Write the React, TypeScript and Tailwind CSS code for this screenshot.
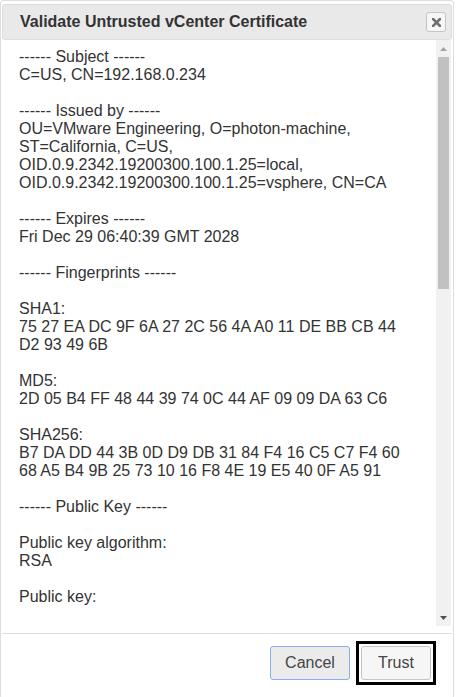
const lines = [
  '------ Subject ------',
  'C=US, CN=192.168.0.234',
  '',
  '------ Issued by ------',
  'OU=VMware Engineering, O=photon-machine,',
  'ST=California, C=US,',
  'OID.0.9.2342.19200300.100.1.25=local,',
  'OID.0.9.2342.19200300.100.1.25=vsphere, CN=CA',
  '',
  '------ Expires ------',
  'Fri Dec 29 06:40:39 GMT 2028',
  '',
  '------ Fingerprints ------',
  '',
  'SHA1:',
  '75 27 EA DC 9F 6A 27 2C 56 4A A0 11 DE BB CB 44',
  'D2 93 49 6B',
  '',
  'MD5:',
  '2D 05 B4 FF 48 44 39 74 0C 44 AF 09 09 DA 63 C6',
  '',
  'SHA256:',
  'B7 DA DD 44 3B 0D D9 DB 31 84 F4 16 C5 C7 F4 60',
  '68 A5 B4 9B 25 73 10 16 F8 4E 19 E5 40 0F A5 91',
  '',
  '------ Public Key ------',
  '',
  'Public key algorithm:',
  'RSA',
  '',
  'Public key:',
];

function Scrollbar() {
  return (
    <div className="w-[15px] flex flex-col bg-[#f1f1f1]">
      <div className="h-[17px] flex items-center justify-center">
        <svg width="7" height="4" viewBox="0 0 7 4">
          <path d="M0 4 L3.5 0 L7 4 Z" fill="#a3a3a3" />
        </svg>
      </div>
      <div className="flex-1 px-[2px]">
        <div className="h-[232px] bg-[#c1c1c1]" />
      </div>
      <div className="h-[17px] flex items-center justify-center">
        <svg width="7" height="4" viewBox="0 0 7 4">
          <path d="M0 0 L7 0 L3.5 4 Z" fill="#505050" />
        </svg>
      </div>
    </div>
  );
}

export default function App() {
  return (
    <div className="w-[456px] h-[697px] bg-white overflow-hidden" style={{ fontFamily: '"Liberation Sans", Arial, sans-serif' }}>
      <div className="w-[454px] h-[699px] border border-[#dddddd] rounded-[3px] pt-[3px] px-[1px] flex flex-col">
        <div className="h-[36px] flex items-center justify-between bg-[#e9e9e9] border border-[#dddddd] rounded-[3px] pl-[17px] pr-[5px]">
          <span className="text-[16px] font-bold text-[#333333]">Validate Untrusted vCenter Certificate</span>
          <button className="w-[20px] h-[20px] flex items-center justify-center bg-[#f6f6f6] border border-[#c5c5c5] rounded-[3px]">
            <svg width="9" height="9" viewBox="0 0 9 9">
              <path d="M1 1 L8 8 M8 1 L1 8" stroke="#6e6e6e" strokeWidth="2.6" strokeLinecap="square" />
            </svg>
          </button>
        </div>

        <div className="h-[586px] flex">
          <div className="flex-1 overflow-hidden pl-[17px] pt-[8px] text-[16px] leading-[18px] text-[#333333]">
            {lines.map((l, i) => (
              <div key={i} className="h-[18px] whitespace-pre">{l}</div>
            ))}
          </div>
          <Scrollbar />
          <div className="w-[1px]" />
        </div>

        <div className="mt-[7px] border-t border-[#dddddd] pt-[12px] pr-[21px] flex justify-end items-start">
          <button className="w-[80px] h-[34px] bg-[#ebebeb] border border-[#8ab0ec] rounded-[3px] text-[16px] text-[#454545]">
            Cancel
          </button>
          <div className="ml-[6px] -my-[5px] -mr-[5px] border-[3px] border-black p-[2px]">
            <button className="block w-[70px] h-[34px] bg-[#f6f6f6] border border-[#c5c5c5] rounded-[3px] text-[16px] text-[#454545]">
              Trust
            </button>
          </div>
        </div>
      </div>
    </div>
  );
}
